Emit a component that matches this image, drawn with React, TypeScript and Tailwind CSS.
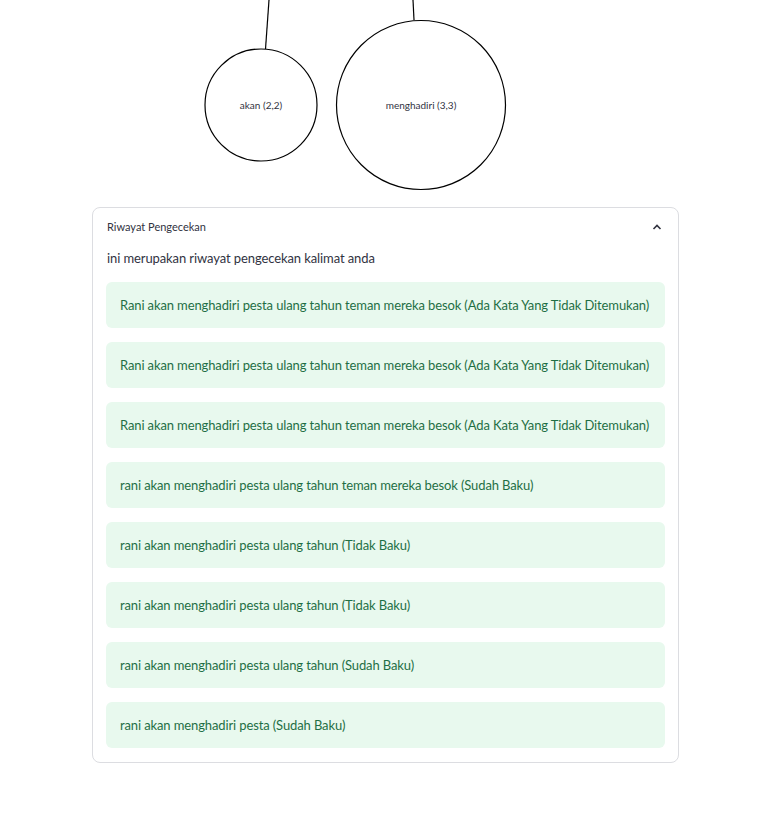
const rows = [
  "Rani akan menghadiri pesta ulang tahun teman mereka besok (Ada Kata Yang Tidak Ditemukan)",
  "Rani akan menghadiri pesta ulang tahun teman mereka besok (Ada Kata Yang Tidak Ditemukan)",
  "Rani akan menghadiri pesta ulang tahun teman mereka besok (Ada Kata Yang Tidak Ditemukan)",
  "rani akan menghadiri pesta ulang tahun teman mereka besok (Sudah Baku)",
  "rani akan menghadiri pesta ulang tahun (Tidak Baku)",
  "rani akan menghadiri pesta ulang tahun (Tidak Baku)",
  "rani akan menghadiri pesta ulang tahun (Sudah Baku)",
  "rani akan menghadiri pesta (Sudah Baku)",
];

function Graph() {
  return (
    <svg width="777" height="207" viewBox="0 0 777 207" className="block">
      <line x1="269" y1="0" x2="265.5" y2="49" stroke="#000" strokeWidth="1.2" />
      <line x1="413" y1="0" x2="414" y2="20" stroke="#000" strokeWidth="1.2" />
      <circle cx="261" cy="105" r="56" fill="#fff" stroke="#000" strokeWidth="1.2" />
      <circle cx="421" cy="105" r="84.5" fill="#fff" stroke="#000" strokeWidth="1.2" />
      <text x="261" y="109" textAnchor="middle" fontSize="10" fill="#31333f" fontFamily="Lato, sans-serif">
        akan (2,2)
      </text>
      <text x="421" y="109" textAnchor="middle" fontSize="10" fill="#31333f" fontFamily="Lato, sans-serif">
        menghadiri (3,3)
      </text>
    </svg>
  );
}

export default function App() {
  return (
    <div className="w-[777px] h-[825px] bg-white font-['Lato',sans-serif] text-[#31333f]">
      <Graph />
      <div className="ml-[92px] w-[587px] rounded-lg border border-[#dcdde1] pb-[14px]">
        <div className="h-[38px] flex items-center justify-between pl-[14px] pr-[16px]">
          <span className="text-[11px]">Riwayat Pengecekan</span>
          <svg width="10" height="6" viewBox="0 0 10 6">
            <polyline points="1.5,5 5,1.5 8.5,5" fill="none" stroke="#31333f" strokeWidth="1.6" />
          </svg>
        </div>
        <div className="px-[13px]">
          <p className="text-[13px] tracking-[-0.1px] leading-[24px] px-[1px]">
            ini merupakan riwayat pengecekan kalimat anda
          </p>
          <div className="mt-[12px] flex flex-col gap-[14px]">
            {rows.map((r, i) => (
              <div
                key={i}
                className="h-[46px] flex items-center pt-[1px] px-[14px] rounded-md bg-[#e8f9ee] text-[#1f6f45] text-[13px] tracking-[-0.12px] whitespace-nowrap"
              >
                {r}
              </div>
            ))}
          </div>
        </div>
      </div>
    </div>
  );
}
